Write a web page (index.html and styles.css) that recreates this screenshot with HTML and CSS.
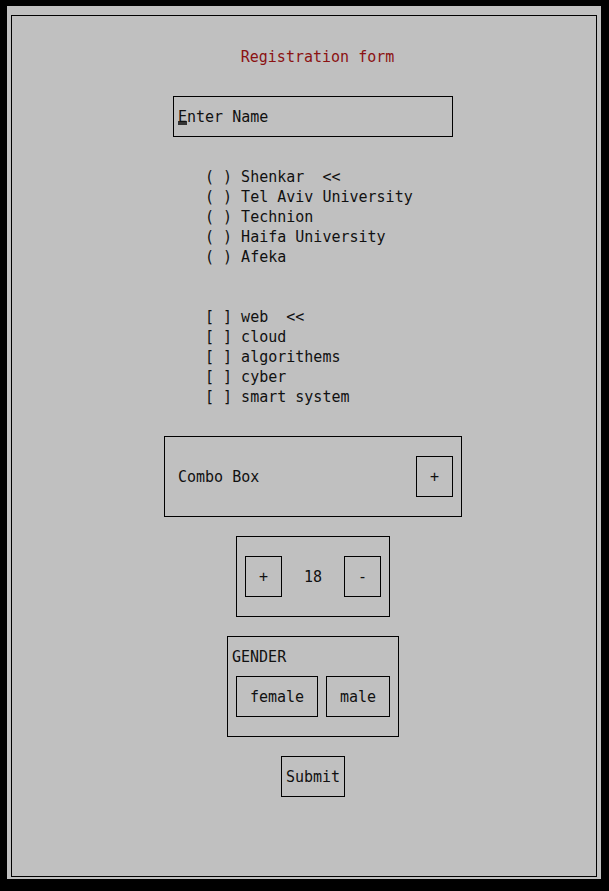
FILE: index.html
```html
<!DOCTYPE html>
<html lang="en">
<head>
  <meta charset="UTF-8">
  <title>Registration form</title>
  <link rel="stylesheet" href="styles.css">
</head>
<body>

  <div class="screen">
    <div class="frame">
      <div class="title">Registration form</div>

      <div class="name-box"><span class="cursor">E</span>nter Name</div>

      <div class="options">
        <div>( ) Shenkar  &lt;&lt;</div>
        <div>( ) Tel Aviv University</div>
        <div>( ) Technion</div>
        <div>( ) Haifa University</div>
        <div>( ) Afeka</div>
      </div>

      <div class="options checks">
        <div>[ ] web  &lt;&lt;</div>
        <div>[ ] cloud</div>
        <div>[ ] algorithems</div>
        <div>[ ] cyber</div>
        <div>[ ] smart system</div>
      </div>

      <div class="combo">
        <span>Combo Box</span>
        <button class="btn">+</button>
      </div>

      <div class="counter">
        <button class="btn">+</button>
        <span>18</span>
        <button class="btn">-</button>
      </div>

      <div class="gender">
        <div>GENDER</div>
        <div class="gender-row">
          <button class="btn female">female</button>
          <button class="btn male">male</button>
        </div>
      </div>

      <button class="btn submit">Submit</button>
    </div>
  </div>

</body>
</html>
```

FILE: styles.css
```css
body {
  margin: 0;
  padding: 6px 0 0 7px;
  background-color: #000;
  font-family: "DejaVu Sans Mono", "Liberation Mono", monospace;
  font-size: 15px;
  line-height: 20px;
  color: #111;
}

.screen {
  width: 594px;
  height: 873px;
  background-color: #c0c0c0;
  padding: 9px 4px 0;
  box-sizing: border-box;
}

.frame {
  width: 586px;
  height: 862px;
  border: 1px solid #000;
  box-sizing: border-box;
  padding-left: 18px;
  display: flex;
  flex-direction: column;
  align-items: center;
}

.title {
  margin: 31px 0 0 9px;
  color: #8b1212;
}

.name-box {
  margin-top: 29px;
  width: 280px;
  height: 41px;
  border: 1px solid #000;
  box-sizing: border-box;
  padding: 10px 4px 9px;
}

.cursor {
  display: inline-block;
  height: 20px;
  background: linear-gradient(to bottom, transparent 14px, #333 14px, #333 18px, transparent 18px);
}

.options {
  margin-top: 29px;
  width: 216px;
}

.options div {
  white-space: pre;
  height: 20px;
  padding-top: 1px;
  box-sizing: border-box;
}

.options.checks {
  margin-top: 40px;
}

.btn {
  width: 37px;
  height: 41px;
  border: 1px solid #000;
  background: none;
  box-sizing: border-box;
  padding: 0;
  font: inherit;
  line-height: 20px;
  color: inherit;
  text-align: center;
}

.combo {
  margin-top: 30px;
  width: 298px;
  height: 81px;
  border: 1px solid #000;
  box-sizing: border-box;
  padding: 0 8px 0 13px;
  display: flex;
  align-items: center;
  justify-content: space-between;
}

.counter {
  margin-top: 19px;
  width: 154px;
  height: 81px;
  border: 1px solid #000;
  box-sizing: border-box;
  padding: 0 8px;
  display: flex;
  align-items: center;
  justify-content: space-between;
}

.gender {
  margin-top: 19px;
  width: 172px;
  height: 101px;
  border: 1px solid #000;
  box-sizing: border-box;
  padding: 10px 4px 0;
}

.gender-row {
  display: flex;
  gap: 8px;
  margin: 9px 0 0 4px;
}

.btn.female {
  width: 82px;
}

.btn.male {
  width: 64px;
}

.btn.submit {
  margin-top: 19px;
  width: 64px;
}
```
